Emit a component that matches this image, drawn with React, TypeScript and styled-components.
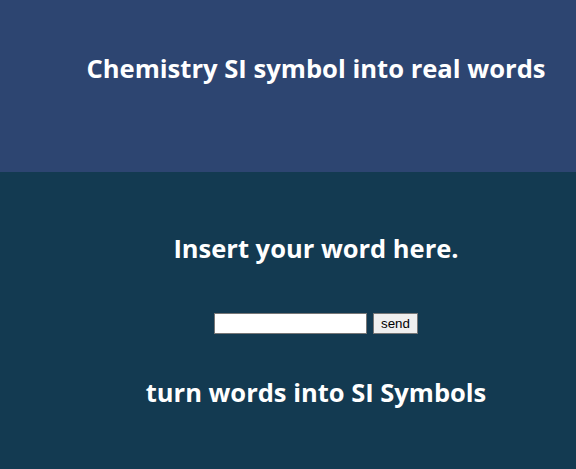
import React from "react";
import styled, { createGlobalStyle } from "styled-components";

const Global = createGlobalStyle`
  html, body { margin: 0; padding: 0; }
  body { background: #133a51; font-family: "Open Sans", "Liberation Sans", sans-serif; }
`;

const Header = styled.header`
  height: 172px;
  background: #2d4571;
  box-sizing: border-box;
  padding: 51px 0 0 56px;
  display: flex;
  justify-content: center;
`;

const Title = styled.h1`
  margin: 0;
  color: #ffffff;
  font-size: 25.6px;
  font-weight: 700;
  line-height: 36px;
`;

const Main = styled.main`
  background: #133a51;
  height: 297px;
  box-sizing: border-box;
  padding: 58px 0 0 56px;
  display: flex;
  flex-direction: column;
  align-items: center;
`;

const Heading = styled.h2`
  margin: 0;
  color: #ffffff;
  font-size: 25.5px;
  font-weight: 700;
  line-height: 36px;
`;

const Form = styled.form`
  display: flex;
  align-items: center;
  gap: 6px;
  margin: 47px 0 40px;
`;

const Input = styled.input`
  width: 153px;
  height: 21px;
  box-sizing: border-box;
  border: 1px solid #767676;
  background: #fff;
  padding: 1px 2px;
  font: 13.33px "Liberation Sans", Arial, sans-serif;
`;

const Button = styled.button`
  height: 21px;
  width: 45px;
  box-sizing: border-box;
  border: 1px solid #767676;
  background: #efefef;
  font: 13.33px "Liberation Sans", Arial, sans-serif;
  color: #000;
  padding: 0;
`;

export default function App() {
  return (
    <>
      <Global />
      <Header>
        <Title>Chemistry SI symbol into real words</Title>
      </Header>
      <Main>
        <Heading>Insert your word here.</Heading>
        <Form onSubmit={(e) => e.preventDefault()}>
          <Input type="text" />
          <Button type="submit">send</Button>
        </Form>
        <Heading>turn words into SI Symbols</Heading>
      </Main>
    </>
  );
}
